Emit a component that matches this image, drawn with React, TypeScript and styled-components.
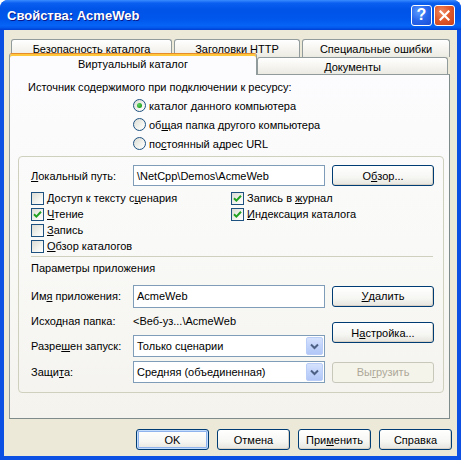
import React from "react";
import styled, { createGlobalStyle, css } from "styled-components";

const GlobalStyle = createGlobalStyle`
  html, body {
    margin: 0;
    padding: 0;
    background: #ffffff;
  }
  body {
    font-family: "Liberation Sans", Arial, sans-serif;
    font-size: 11px;
    color: #000;
  }
`;

const Window = styled.div`
  width: 461px;
  height: 460px;
  display: flex;
  flex-direction: column;
  border-radius: 8px 8px 0 0;
  overflow: hidden;
  background: #0b4fe3;
`;

const TitleBar = styled.div`
  height: 30px;
  flex: none;
  display: flex;
  align-items: center;
  padding: 0 6px 0 7px;
  box-sizing: border-box;
  background: linear-gradient(
    180deg,
    #3b8cff 0%,
    #0a5ff0 10%,
    #0054e8 30%,
    #0055ea 60%,
    #0563f6 85%,
    #0359ec 92%,
    #003ed5 100%
  );
`;

const Title = styled.div`
  flex: 1;
  color: #fff;
  font-family: "Liberation Sans", Arial, sans-serif;
  font-weight: bold;
  font-size: 13px;
  text-shadow: 1px 1px 0 #0a1a8c;
  padding-top: 1px;
`;

const Caption = styled.div<{ $red?: boolean }>`
  width: 21px;
  height: 21px;
  box-sizing: border-box;
  margin-left: 2px;
  border: 1px solid #fff;
  border-radius: 3px;
  display: flex;
  align-items: center;
  justify-content: center;
  color: #fff;
  font-weight: bold;
  font-size: 16px;
  font-family: "Liberation Sans", Arial, sans-serif;
  background: ${(p) =>
    p.$red
      ? "radial-gradient(circle at 35% 30%, #f08a64 0%, #e05a2c 45%, #c8401a 100%)"
      : "radial-gradient(circle at 35% 30%, #5a9bff 0%, #2866ec 50%, #1a4fd6 100%)"};
`;

const Body = styled.div`
  flex: 1;
  display: flex;
  flex-direction: column;
  background: #ece9d8;
  margin: 0 4px 4px 4px;
  padding: 9px 5px 0 5px;
`;

const TabStrip = styled.div`
  display: flex;
  flex-direction: column;
`;

const TabRow = styled.div<{ $back?: boolean }>`
  display: flex;
  align-items: flex-end;
  gap: 2px;
  height: ${(p) => (p.$back ? 18 : 17)}px;
  margin-left: ${(p) => (p.$back ? 2 : 0)}px;
`;

const Tab = styled.div<{ $w: number; $active?: boolean }>`
  width: ${(p) => p.$w}px;
  height: 100%;
  box-sizing: border-box;
  border: 1px solid #919b9c;
  border-bottom: none;
  border-radius: 3px 3px 0 0;
  background: linear-gradient(180deg, #ffffff 0%, #f4f3ee 60%, #ebeae2 100%);
  display: flex;
  align-items: center;
  justify-content: center;
  padding-top: 1px;
  white-space: nowrap;
  ${(p) =>
    p.$active &&
    css`
      height: 22px;
      margin-bottom: -1px;
      position: relative;
      z-index: 1;
      border-top: 1px solid #e68b2c;
      box-shadow: inset 0 2px 0 #ffc83c;
      background: #fcfcfe;
      align-items: flex-start;
      padding-top: 4px;
    `}
`;

const Panel = styled.div`
  width: 441px;
  height: 345px;
  box-sizing: border-box;
  border: 1px solid #919b9c;
  border-right-color: #7f8a8b;
  border-bottom-color: #7f8a8b;
  background: linear-gradient(180deg, #fcfcfe 0%, #f9f9f7 50%, #f4f3ee 100%);
  display: flex;
  flex-direction: column;
`;

const Heading = styled.div`
  margin: 6px 0 0 18px;
  line-height: 13px;
`;

const RadioList = styled.div`
  margin: 2px 0 0 123px;
  display: flex;
  flex-direction: column;
`;

const OptionRow = styled.label`
  height: 19px;
  display: flex;
  align-items: center;
  gap: 3px;
  white-space: nowrap;
`;

const RadioDot = styled.span<{ $on?: boolean }>`
  width: 13px;
  height: 13px;
  box-sizing: border-box;
  border-radius: 50%;
  border: 1px solid #1c5180;
  background: linear-gradient(135deg, #dcdcd5 0%, #f3f3ef 60%, #ffffff 100%);
  display: flex;
  align-items: center;
  justify-content: center;
  &::after {
    content: "";
    display: ${(p) => (p.$on ? "block" : "none")};
    width: 5px;
    height: 5px;
    border-radius: 50%;
    background: radial-gradient(circle at 35% 35%, #5fd35f 0%, #21a121 70%);
  }
`;

const Group = styled.div`
  margin: 3px 0 0 8px;
  width: 426px;
  box-sizing: border-box;
  border: 1px solid #d0d0bf;
  border-radius: 4px;
  padding: 8px 9px 7px 12px;
  display: flex;
  flex-direction: column;
`;

const FieldGrid = styled.div<{ $rows: string }>`
  display: grid;
  grid-template-columns: 102px 199px 102px;
  grid-template-rows: ${(p) => p.$rows};
  align-items: center;
`;

const FieldLabel = styled.div`
  white-space: nowrap;
`;

const TextBox = styled.div<{ $h?: number }>`
  width: 192px;
  height: ${(p) => p.$h ?? 21}px;
  box-sizing: border-box;
  border: 1px solid #7f9db9;
  background: #fff;
  display: flex;
  align-items: center;
  padding-left: 3px;
  white-space: nowrap;
`;

const Select = styled(TextBox)`
  justify-content: space-between;
  padding-right: 1px;
`;

const DropArrow = styled.span`
  width: 17px;
  height: 18px;
  box-sizing: border-box;
  border: 1px solid #b9cdf7;
  border-radius: 2px;
  background: linear-gradient(180deg, #d6e2fd 0%, #c1d3fb 50%, #b2c7f7 100%);
  display: flex;
  align-items: center;
  justify-content: center;
`;

const Button = styled.div<{ $default?: boolean; $disabled?: boolean; $h?: number }>`
  height: ${(p) => p.$h ?? 21}px;
  box-sizing: border-box;
  border: 1px solid #003c74;
  border-radius: 3px;
  background: linear-gradient(180deg, #ffffff 0%, #f6f6f3 60%, #e6e5de 100%);
  box-shadow: inset -1px -1px 0 #d8d2c6;
  display: flex;
  align-items: center;
  justify-content: center;
  white-space: nowrap;
  ${(p) =>
    p.$default &&
    css`
      box-shadow: inset 0 0 0 1px #c4dcfb, inset 0 0 0 2px #8fb3ec;
    `}
  ${(p) =>
    p.$disabled &&
    css`
      border-color: #c9c7ba;
      color: #aca899;
      background: #f5f4ea;
      box-shadow: none;
    `}
`;

const SideButton = styled(Button)`
  grid-column: 3;
  grid-row: 2 / 4;
  align-self: start;
  margin-top: 14px;
`;

const ChecksGrid = styled.div`
  margin-top: 4px;
  display: grid;
  grid-template-columns: 200px 1fr;
  grid-auto-rows: 16px;
`;

const CheckRow = styled.label<{ $col?: number; $row?: number }>`
  display: flex;
  align-items: center;
  gap: 3px;
  white-space: nowrap;
  grid-column: ${(p) => p.$col ?? 1};
  grid-row: ${(p) => p.$row ?? "auto"};
`;

const CheckBox = styled.span`
  width: 13px;
  height: 13px;
  box-sizing: border-box;
  border: 1px solid #1c5180;
  background: linear-gradient(135deg, #dcdcd5 0%, #f3f3ef 60%, #ffffff 100%);
  display: flex;
  align-items: center;
  justify-content: center;
`;

const Separator = styled.div`
  margin-top: 2px;
  height: 1px;
  width: 402px;
  background: #d0d0bf;
`;

const SubHeading = styled.div`
  margin-top: 5px;
  line-height: 13px;
`;

const ButtonRow = styled.div`
  margin-top: 10px;
  display: flex;
  justify-content: flex-end;
  gap: 8px;
`;

const DialogButton = styled(Button)`
  width: 73px;
`;

const K = styled.span`
  text-decoration: underline;
  text-underline-offset: 1px;
`;

const Tick = () => (
  <svg width="9" height="9" viewBox="0 0 9 9">
    <path d="M1 4.2 L3.4 6.6 L8 1.8" fill="none" stroke="#21a121" strokeWidth="2" />
  </svg>
);

const Check = ({ on }: { on?: boolean }) => <CheckBox>{on && <Tick />}</CheckBox>;

const Chevron = () => (
  <svg width="9" height="7" viewBox="0 0 9 7">
    <path d="M1 1.5 L4.5 5 L8 1.5" fill="none" stroke="#4d6185" strokeWidth="2" />
  </svg>
);

const CloseGlyph = () => (
  <svg width="11" height="11" viewBox="0 0 11 11">
    <path d="M1.5 1.5 L9.5 9.5 M9.5 1.5 L1.5 9.5" stroke="#fff" strokeWidth="2.2" strokeLinecap="square" />
  </svg>
);

const App = () => {
  return (
    <>
      <GlobalStyle />
      <Window>
        <TitleBar>
          <Title>Свойства: AcmeWeb</Title>
          <Caption>?</Caption>
          <Caption $red>
            <CloseGlyph />
          </Caption>
        </TitleBar>
        <Body>
          <TabStrip>
            <TabRow $back>
              <Tab $w={161}>Безопасность каталога</Tab>
              <Tab $w={126}>Заголовки HTTP</Tab>
              <Tab $w={148}>Специальные ошибки</Tab>
            </TabRow>
            <TabRow>
              <Tab $w={248} $active>
                Виртуальный каталог
              </Tab>
              <Tab $w={191} style={{ marginLeft: -2 }}>
                Документы
              </Tab>
            </TabRow>
          </TabStrip>
          <Panel>
            <Heading>Источник содержимого при подключении к ресурсу:</Heading>
            <RadioList>
              <OptionRow>
                <RadioDot $on />
                <span>
                  каталог <K>д</K>анного компьютера
                </span>
              </OptionRow>
              <OptionRow>
                <RadioDot />
                <span>
                  об<K>щ</K>ая папка другого компьютера
                </span>
              </OptionRow>
              <OptionRow>
                <RadioDot />
                <span>
                  по<K>с</K>тоянный адрес URL
                </span>
              </OptionRow>
            </RadioList>
            <Group>
              <FieldGrid $rows="21px">
                <FieldLabel>
                  <K>Л</K>окальный путь:
                </FieldLabel>
                <TextBox $h={21}>\NetCpp\Demos\AcmeWeb</TextBox>
                <Button>
                  О<K>б</K>зор...
                </Button>
              </FieldGrid>
              <ChecksGrid>
                <CheckRow $row={1}>
                  <Check />
                  <span>
                    Доступ к тексту с<K>ц</K>енария
                  </span>
                </CheckRow>
                <CheckRow $row={2}>
                  <Check on />
                  <span>
                    <K>Ч</K>тение
                  </span>
                </CheckRow>
                <CheckRow $row={3}>
                  <Check />
                  <span>
                    <K>З</K>апись
                  </span>
                </CheckRow>
                <CheckRow $row={4}>
                  <Check />
                  <span>
                    <K>О</K>бзор каталогов
                  </span>
                </CheckRow>
                <CheckRow $col={2} $row={1}>
                  <Check on />
                  <span>
                    Запись в <K>ж</K>урнал
                  </span>
                </CheckRow>
                <CheckRow $col={2} $row={2}>
                  <Check on />
                  <span>
                    <K>И</K>ндексация каталога
                  </span>
                </CheckRow>
              </ChecksGrid>
              <Separator />
              <SubHeading>Параметры приложения</SubHeading>
              <FieldGrid $rows="24px 25px 26px 26px" style={{ marginTop: 9 }}>
                <FieldLabel>
                  Им<K>я</K> приложения:
                </FieldLabel>
                <TextBox $h={23}>AcmeWeb</TextBox>
                <Button>
                  <K>У</K>далить
                </Button>

                <FieldLabel>Исходная папка:</FieldLabel>
                <FieldLabel>&lt;Веб-уз...\AcmeWeb</FieldLabel>
                <SideButton>
                  Н<K>а</K>стройка...
                </SideButton>

                <FieldLabel>
                  Разре<K>ш</K>ен запуск:
                </FieldLabel>
                <Select $h={22}>
                  <span>Только сценарии</span>
                  <DropArrow>
                    <Chevron />
                  </DropArrow>
                </Select>

                <FieldLabel>
                  Защи<K>т</K>а:
                </FieldLabel>
                <Select $h={22}>
                  <span>Средняя (объединенная)</span>
                  <DropArrow>
                    <Chevron />
                  </DropArrow>
                </Select>
                <Button $disabled>
                  Вы<K>г</K>рузить
                </Button>
              </FieldGrid>
            </Group>
          </Panel>
          <ButtonRow>
            <DialogButton $default>OK</DialogButton>
            <DialogButton>Отмена</DialogButton>
            <DialogButton>
              При<K>м</K>енить
            </DialogButton>
            <DialogButton>Справка</DialogButton>
          </ButtonRow>
        </Body>
      </Window>
    </>
  );
};

export default App;
